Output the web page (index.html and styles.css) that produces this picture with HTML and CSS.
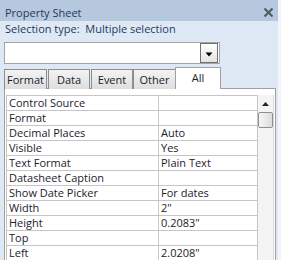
FILE: index.html
```html
<!DOCTYPE html>
<html lang="en">
<head>
  <meta charset="UTF-8">
  <title>Property Sheet</title>
  <link rel="stylesheet" href="styles.css">
</head>
<body>
  <div class="sheet">
    <div class="titlebar">
      <span class="title">Property Sheet</span>
      <svg class="close" viewBox="0 0 9 9"><path d="M1.2 1.2L7.8 7.8M7.8 1.2L1.2 7.8" stroke="#4f5862" stroke-width="2" stroke-linecap="square"/></svg>
    </div>
    <div class="seltype">Selection type:&nbsp; Multiple selection</div>
    <div class="combo">
      <div class="combo-btn">
        <svg viewBox="0 0 8 5"><path d="M0.5 0.5H7.5L4 4.5Z" fill="#000"/></svg>
      </div>
    </div>
    <div class="tabs">
      <div class="tab tab-format">Format</div>
      <div class="tab tab-data">Data</div>
      <div class="tab tab-event">Event</div>
      <div class="tab tab-other">Other</div>
      <div class="tab tab-all active">All</div>
    </div>
    <div class="panel">
      <div class="props">
        <div class="row"><div class="name">Control Source</div><div class="value"></div></div>
        <div class="row"><div class="name">Format</div><div class="value"></div></div>
        <div class="row"><div class="name">Decimal Places</div><div class="value">Auto</div></div>
        <div class="row"><div class="name">Visible</div><div class="value">Yes</div></div>
        <div class="row"><div class="name">Text Format</div><div class="value">Plain Text</div></div>
        <div class="row"><div class="name">Datasheet Caption</div><div class="value"></div></div>
        <div class="row"><div class="name">Show Date Picker</div><div class="value">For dates</div></div>
        <div class="row"><div class="name">Width</div><div class="value">2"</div></div>
        <div class="row"><div class="name">Height</div><div class="value">0.2083"</div></div>
        <div class="row"><div class="name">Top</div><div class="value"></div></div>
        <div class="row"><div class="name">Left</div><div class="value">2.0208"</div></div>
      </div>
      <div class="scrollbar">
        <div class="sb-arrow">
          <svg viewBox="0 0 7 4"><path d="M0 4H7L3.5 0Z" fill="#222"/></svg>
        </div>
        <div class="sb-thumb"></div>
      </div>
    </div>
  </div>
</body>
</html>
```

FILE: styles.css
```css
body {
  margin: 0;
  background: #f2f6fb;
  font-family: 'Open Sans', 'Noto Sans', Arial, sans-serif;
  font-size: 11px;
}
.sheet {
  width: 278px;
  height: 260px;
  background: #dfe9f5;
  overflow: hidden;
}
.titlebar {
  height: 21px;
  background: #b6c8de;
  display: flex;
  align-items: flex-start;
  justify-content: space-between;
  box-sizing: border-box;
  padding: 5px 5px 0 5px;
}
.title {
  color: #1e395b;
  line-height: 15px;
}
.close {
  width: 9px;
  height: 9px;
  margin-top: 3px;
}
.seltype {
  color: #1e395b;
  line-height: 15px;
  height: 21px;
  padding-left: 5px;
}
.combo {
  margin-left: 4px;
  width: 216px;
  height: 22px;
  box-sizing: border-box;
  border: 1px solid #a5a5a5;
  background: #fff;
  display: flex;
  justify-content: flex-end;
  align-items: center;
  padding-right: 1px;
}
.combo-btn {
  width: 18px;
  height: 20px;
  box-sizing: border-box;
  border: 1px solid #6f6f6f;
  background: linear-gradient(#ffffff, #e4e4e4);
  display: flex;
  align-items: center;
  justify-content: center;
}
.combo-btn svg {
  width: 8px;
  height: 5px;
  margin-top: 2px;
}
.tabs {
  display: flex;
  align-items: flex-end;
  gap: 1px;
  margin: 4px 0 0 4px;
  height: 21px;
  position: relative;
  z-index: 1;
}
.tab {
  height: 20px;
  box-sizing: border-box;
  border: 1px solid #8d8d8d;
  border-bottom: none;
  background: linear-gradient(#f3f3f3, #dedede);
  color: #1b1b2b;
  text-align: center;
  line-height: 19px;
}
.tab-format { width: 43px; }
.tab-data { width: 42px; }
.tab-event { width: 42px; }
.tab-other { width: 43px; margin-left: -1px; }
.tab.active {
  width: 46px;
  height: 22px;
  margin-left: -2px;
  background: #fff;
  border-color: #a0a0a0;
}
.panel {
  margin: -1px 0 0 4px;
  width: 272px;
  height: 180px;
  box-sizing: border-box;
  border: 1px solid #a0a0a0;
  background: #fff;
  display: flex;
  align-items: flex-start;
  padding: 6px 1px 0 1px;
}
.props {
  width: 252px;
  flex-shrink: 0;
  box-sizing: border-box;
  border: 1px solid #c6c6c6;
  border-bottom: none;
}
.row {
  display: flex;
  height: 15px;
  box-sizing: border-box;
  border-bottom: 1px solid #c6c6c6;
  color: #1b1b2b;
  line-height: 14px;
  white-space: nowrap;
}
.name {
  width: 152px;
  box-sizing: border-box;
  border-right: 1px solid #c6c6c6;
  padding-left: 2px;
}
.value {
  flex: 1;
  padding-left: 2px;
}
.scrollbar {
  width: 16px;
  height: 180px;
  background: #f4f4f4;
  border-right: 1px solid #dadada;
  box-sizing: border-box;
}
.sb-arrow {
  height: 17px;
  display: flex;
  align-items: center;
  justify-content: center;
}
.sb-arrow svg {
  width: 7px;
  height: 4px;
}
.sb-thumb {
  height: 16px;
  box-sizing: border-box;
  border: 1px solid #8e8e8e;
  border-radius: 2px;
  background: linear-gradient(90deg, #f6f6f6, #dcdcdc);
}
```
